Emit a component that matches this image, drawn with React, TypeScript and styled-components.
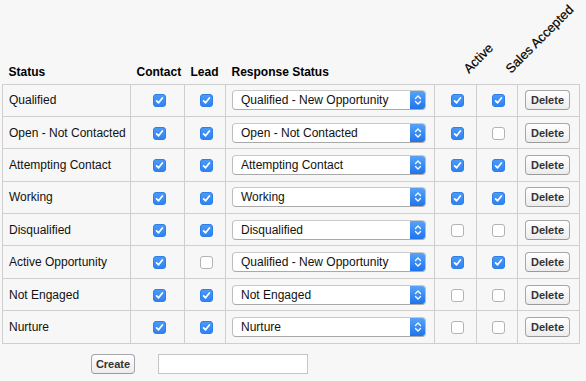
import React from "react";
import styled, { createGlobalStyle } from "styled-components";

const Global = createGlobalStyle`
  html, body { margin: 0; padding: 0; background: #f7f7f7; }
  body { font-family: "Liberation Sans", Arial, Helvetica, sans-serif; font-size: 12px; color: #111; }
`;

const Page = styled.div`
  width: 586px;
  height: 381px;
  padding: 0 0 0 2px;
  box-sizing: border-box;
  overflow: hidden;
`;

const Table = styled.table`
  border-collapse: collapse;
  table-layout: fixed;
  width: 577px;
`;

const HeadCell = styled.th<{ $rot?: boolean; $pl?: number }>`
  height: 84px;
  padding: 0 0 ${(p) => (p.$rot ? 8 : 5)}px ${(p) => p.$pl ?? 6}px;
  vertical-align: bottom;
  text-align: left;
  font-size: 12px;
  font-weight: bold;
  color: #000;
  white-space: nowrap;
  box-sizing: border-box;
`;

const Rotated = styled.span`
  display: inline-block;
  transform-origin: left bottom;
  transform: rotate(-45deg);
  font-weight: normal;
  font-size: 13px;
  -webkit-text-stroke: 0.2px #000;
  white-space: nowrap;
  line-height: 15px;
`;

const Row = styled.tr`
  height: 32.4px;
`;

const Cell = styled.td<{ $center?: boolean; $pl?: number }>`
  border: 1px solid #cfcfcf;
  padding: 0 0 0 ${(p) => p.$pl ?? 6}px;
  text-align: ${(p) => (p.$center ? "center" : "left")};
  vertical-align: middle;
  color: #111;
  white-space: nowrap;
`;

const Box = styled.span<{ $on: boolean }>`
  display: inline-flex;
  align-items: center;
  justify-content: center;
  width: 13px;
  height: 13px;
  box-sizing: border-box;
  border-radius: 3px;
  vertical-align: middle;
  margin-left: 3px;
  background: ${(p) => (p.$on ? "linear-gradient(#4a9af8, #2f83f2)" : "#fff")};
  border: 1px solid ${(p) => (p.$on ? "#2f7fe8" : "#b3b3b3")};
`;

const SelectBox = styled.div`
  display: flex;
  align-items: stretch;
  width: 194px;
  height: 20px;
  box-sizing: border-box;
  background: #fff;
  border: 1px solid #bdbdbd;
  border-top-color: #c9c9c9;
  border-bottom-color: #a9a9a9;
  border-radius: 4px;
  overflow: hidden;
`;

const SelectText = styled.span`
  flex: 1;
  padding-left: 8px;
  line-height: 18px;
  font-size: 12px;
  color: #111;
`;

const SelectArrow = styled.span`
  width: 15px;
  display: flex;
  align-items: center;
  justify-content: center;
  background: linear-gradient(#57a3fa, #1f74ea);
`;

const Btn = styled.button<{ $w: number }>`
  width: ${(p) => p.$w}px;
  height: 20px;
  padding: 0;
  box-sizing: border-box;
  border: 1px solid #a6a6a6;
  border-bottom-color: #9a9a9a;
  border-radius: 4px;
  background: linear-gradient(#ffffff, #ececec);
  font-family: "Liberation Sans", Arial, sans-serif;
  font-weight: bold;
  font-size: 11px;
  color: #333;
  vertical-align: middle;
`;

const Footer = styled.div`
  display: flex;
  align-items: center;
  gap: 23px;
  padding: 10px 0 0 89px;
`;

const TextInput = styled.input`
  width: 150px;
  height: 20px;
  box-sizing: border-box;
  border: 1px solid #c4c4c4;
  background: #fff;
  padding: 0 4px;
  font-family: "Liberation Sans", Arial, sans-serif;
  font-size: 12px;
`;

const Check = ({ on }: { on: boolean }) => (
  <Box $on={on}>
    {on && (
      <svg width="9" height="9" viewBox="0 0 9 9">
        <path d="M1.6 4.8 L3.6 6.8 L7.4 2" fill="none" stroke="#fff" strokeWidth="1.7" strokeLinecap="round" strokeLinejoin="round" />
      </svg>
    )}
  </Box>
);

const Select = ({ value }: { value: string }) => (
  <SelectBox>
    <SelectText>{value}</SelectText>
    <SelectArrow>
      <svg width="8" height="12" viewBox="0 0 8 12">
        <path d="M1.5 4.5 L4 2 L6.5 4.5 M1.5 7.5 L4 10 L6.5 7.5" fill="none" stroke="#fff" strokeWidth="1.3" strokeLinecap="round" strokeLinejoin="round" />
      </svg>
    </SelectArrow>
  </SelectBox>
);

type R = { status: string; contact: boolean; lead: boolean; resp: string; active: boolean; sales: boolean };

const rows: R[] = [
  { status: "Qualified", contact: true, lead: true, resp: "Qualified - New Opportunity", active: true, sales: true },
  { status: "Open - Not Contacted", contact: true, lead: true, resp: "Open - Not Contacted", active: true, sales: false },
  { status: "Attempting Contact", contact: true, lead: true, resp: "Attempting Contact", active: true, sales: true },
  { status: "Working", contact: true, lead: true, resp: "Working", active: true, sales: true },
  { status: "Disqualified", contact: true, lead: true, resp: "Disqualified", active: false, sales: false },
  { status: "Active Opportunity", contact: true, lead: false, resp: "Qualified - New Opportunity", active: true, sales: true },
  { status: "Not Engaged", contact: true, lead: true, resp: "Not Engaged", active: false, sales: false },
  { status: "Nurture", contact: true, lead: true, resp: "Nurture", active: false, sales: false },
];

export default function App() {
  return (
    <Page>
      <Global />
      <Table>
        <colgroup>
          <col style={{ width: 128 }} />
          <col style={{ width: 54 }} />
          <col style={{ width: 41 }} />
          <col style={{ width: 209 }} />
          <col style={{ width: 42 }} />
          <col style={{ width: 41 }} />
          <col style={{ width: 62 }} />
        </colgroup>
        <thead>
          <tr>
            <HeadCell>Status</HeadCell>
            <HeadCell>Contact</HeadCell>
            <HeadCell>Lead</HeadCell>
            <HeadCell>Response Status</HeadCell>
            <HeadCell $rot $pl={36}>
              <Rotated>Active</Rotated>
            </HeadCell>
            <HeadCell $rot $pl={36}>
              <Rotated>Sales Accepted</Rotated>
            </HeadCell>
            <HeadCell />
          </tr>
        </thead>
        <tbody>
          {rows.map((r) => (
            <Row key={r.status}>
              <Cell>{r.status}</Cell>
              <Cell $center $pl={0}><Check on={r.contact} /></Cell>
              <Cell $center $pl={0}><Check on={r.lead} /></Cell>
              <Cell $pl={6}><Select value={r.resp} /></Cell>
              <Cell $center $pl={0}><Check on={r.active} /></Cell>
              <Cell $center $pl={0}><Check on={r.sales} /></Cell>
              <Cell $pl={7}><Btn $w={45}>Delete</Btn></Cell>
            </Row>
          ))}
        </tbody>
      </Table>
      <Footer>
        <Btn $w={44}>Create</Btn>
        <TextInput type="text" />
      </Footer>
    </Page>
  );
}
